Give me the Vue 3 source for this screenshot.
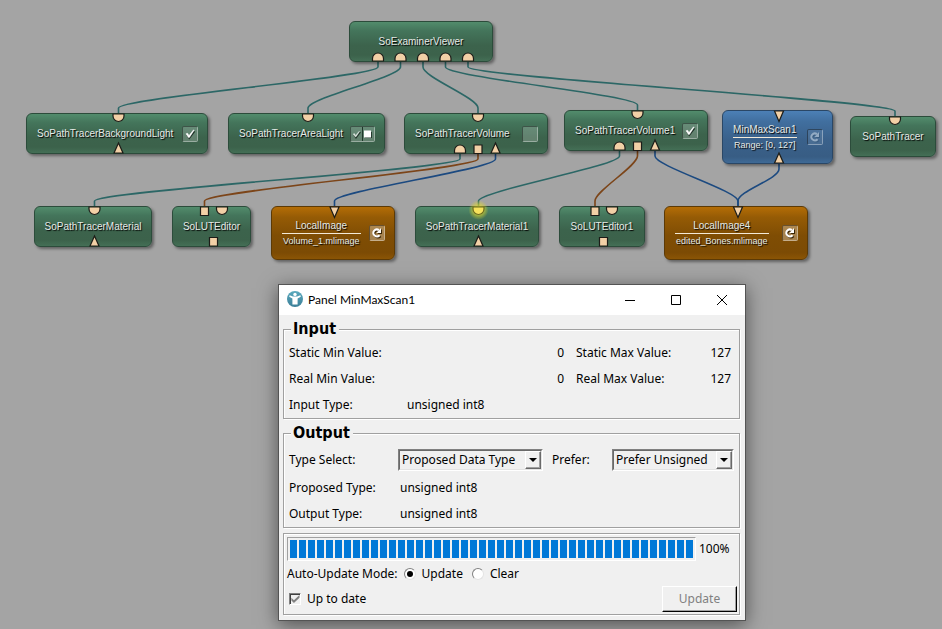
<script setup>
import { ref } from 'vue'

const nodes = [
  { x: 349, y: 21, w: 144, h: 41, kind: 'scene', name: 'SoExaminerViewer' },
  { x: 26, y: 113, w: 182, h: 41, kind: 'scene', name: 'SoPathTracerBackgroundLight', tool: 'check' },
  { x: 228, y: 113, w: 157, h: 41, kind: 'scene', name: 'SoPathTracerAreaLight', tool: 'double' },
  { x: 404, y: 113, w: 144, h: 41, kind: 'scene', name: 'SoPathTracerVolume', tool: 'empty' },
  { x: 564, y: 110, w: 144, h: 41, kind: 'scene', name: 'SoPathTracerVolume1', tool: 'check' },
  { x: 722, y: 110, w: 111, h: 54, kind: 'image', name: 'MinMaxScan1', info: 'Range: [0, 127]', tool: 'reload', dim: true },
  { x: 850, y: 116, w: 86, h: 41, kind: 'scene', name: 'SoPathTracer' },
  { x: 34, y: 206, w: 118, h: 41, kind: 'scene', name: 'SoPathTracerMaterial' },
  { x: 172, y: 206, w: 79, h: 41, kind: 'scene', name: 'SoLUTEditor' },
  { x: 271, y: 206, w: 124, h: 54, kind: 'macro', name: 'LocalImage', info: 'Volume_1.mlimage', tool: 'reload' },
  { x: 415, y: 206, w: 124, h: 41, kind: 'scene', name: 'SoPathTracerMaterial1' },
  { x: 559, y: 206, w: 86, h: 41, kind: 'scene', name: 'SoLUTEditor1' },
  { x: 664, y: 206, w: 144, h: 54, kind: 'macro', name: 'LocalImage4', info: 'edited_Bones.mlimage', tool: 'reload' },
]

const shapes = {
  dome: 'M-5.5 0V-2.5A5.5 5.5 0 0 1 5.5 -2.5V0Z',
  cup: 'M-5.5 0V2A5.5 5.5 0 0 0 5.5 2V0Z',
  up: 'M-4.5 0L0 -10L4.5 0Z',
  down: 'M-4.5 0L0 10.5L4.5 0Z',
  box: 'M-4 0V-8.5H4V0Z',
  boxTop: 'M-4 0V8.5H4V0Z',
}

const ports = [
  ['dome', 378, 61], ['dome', 400.5, 61], ['dome', 423, 61], ['dome', 445.5, 61], ['dome', 468, 61],
  ['cup', 118.5, 114], ['up', 118.5, 153],
  ['cup', 308, 114],
  ['cup', 478, 114], ['dome', 460, 153], ['box', 478, 153.5], ['up', 495.5, 153],
  ['cup', 637.5, 111], ['dome', 619.5, 150], ['box', 637.5, 150.5], ['up', 655, 150],
  ['down', 779, 111], ['up', 779, 163],
  ['cup', 895, 117],
  ['cup', 94.5, 207], ['up', 94.5, 246],
  ['boxTop', 204.5, 207], ['cup', 222, 207], ['box', 213.5, 246],
  ['down', 334.5, 207],
  ['cup', 478.5, 207, true], ['up', 478.5, 246],
  ['boxTop', 595, 207], ['cup', 612, 207], ['box', 603.5, 246],
  ['down', 738, 207],
]

const wires = [
  ['scene', 378, 62, 118.5, 113], ['scene', 400.5, 62, 308, 113], ['scene', 423, 62, 478, 113],
  ['scene', 445.5, 62, 637.5, 110], ['scene', 468, 62, 895, 116],
  ['scene', 460, 154, 94.5, 206], ['base', 478, 154, 204.5, 206], ['image', 495.5, 154, 334.5, 206],
  ['scene', 619.5, 151, 478.5, 206], ['base', 637.5, 151, 595, 206], ['image', 655, 151, 738, 206],
  ['image', 779, 164, 738, 206],
]

const wirePath = ([, x1, y1, x2, y2]) =>
  `M${x1} ${y1}V${y1 + 5}C${x1} ${y1 + 15} ${x2} ${y2 - 15} ${x2} ${y2 - 5}V${y2}`

const typeSelect = ref('Proposed Data Type')
const prefer = ref('Prefer Unsigned')
const mode = ref('Update')
const upToDate = ref(true)
</script>

<template>
  <main class="canvas">
    <svg class="layer" aria-hidden="true">
      <path v-for="(w, i) in wires" :key="i" class="wire" :class="w[0]" :d="wirePath(w)" />
    </svg>

    <div
      v-for="n in nodes"
      :key="n.name"
      class="node"
      :class="[n.kind, { plain: !n.tool, detailed: n.info }]"
      :style="{ left: n.x + 'px', top: n.y + 'px', width: n.w + 'px', height: n.h + 'px' }"
    >
      <div class="caption">
        <div class="name">{{ n.name }}</div>
        <div v-if="n.info" class="info">{{ n.info }}</div>
      </div>
      <button v-if="n.tool" class="tool" :class="[n.tool, { dim: n.dim }]" type="button" :aria-label="n.name">
        <svg v-if="n.tool === 'check'" width="14" height="14" viewBox="0 0 14 14">
          <path d="M4 7.5L6.3 11L11.5 4.2" fill="none" stroke="#1f3328" stroke-width="1.8" />
          <path d="M3 6.8L4.6 6.3L6 8.6L10.6 2.8L11 3.4L6.4 10.4H5.4Z" fill="#fff" stroke="#fff" stroke-width=".5" />
        </svg>
        <svg v-else-if="n.tool === 'double'" width="23" height="14" viewBox="0 0 23 14">
          <path d="M3 7.7L5 10.8L9.3 5" fill="none" stroke="#1f3328" stroke-width="1.5" />
          <path d="M2.2 7L3.4 6.6L4.6 8.4L8.2 4.2L8.6 4.6L5 9.8H4.2Z" fill="#e4ebe6" stroke="#e4ebe6" stroke-width=".4" />
          <path d="M11.5 0V14" stroke="#20382b" />
          <path d="M14 5H21V11H14Z" fill="#24382c" />
          <path d="M13 3.5H20V10.5H13Z" fill="#fff" />
        </svg>
        <svg v-else-if="n.tool === 'reload'" width="14" height="14" viewBox="0 0 14 14">
          <g class="arrow-shadow" transform="translate(1 1)">
            <path d="M9.6 9.2A3.6 3.4 0 1 1 9 4.2" fill="none" stroke-width="2" />
            <path d="M11 2V7H6.4Z" stroke="none" />
          </g>
          <g class="arrow">
            <path d="M9.6 9.2A3.6 3.4 0 1 1 9 4.2" fill="none" stroke-width="2" />
            <path d="M11 2V7H6.4Z" stroke="none" />
          </g>
        </svg>
      </button>
    </div>

    <svg class="layer ports" aria-hidden="true">
      <defs>
        <radialGradient id="glow">
          <stop offset="0" stop-color="#ffee30" stop-opacity=".9" />
          <stop offset=".55" stop-color="#e6dc28" stop-opacity=".55" />
          <stop offset="1" stop-color="#e6dc28" stop-opacity="0" />
        </radialGradient>
      </defs>
      <circle cx="478.5" cy="210" r="10" fill="url(#glow)" />
      <path
        v-for="(p, i) in ports"
        :key="i"
        class="port"
        :class="{ active: p[3] }"
        :d="shapes[p[0]]"
        :transform="`translate(${p[1]} ${p[2]})`"
      />
    </svg>

    <section class="window">
      <header class="titlebar">
        <svg class="logo" width="16" height="16" viewBox="0 0 16 16" aria-hidden="true">
          <defs>
            <linearGradient id="disc" x1="0" y1="0" x2="0" y2="1">
              <stop offset="0" stop-color="#5aa9bd" />
              <stop offset="1" stop-color="#3c7f98" />
            </linearGradient>
          </defs>
          <circle cx="8" cy="8" r="8" fill="url(#disc)" />
          <circle cx="8" cy="3.4" r="1.7" fill="#fff" />
          <path d="M2.6 4.3L6 5.4H10L13.4 4.3L13.8 5.8L10.6 7.6V13.4H5.4V7.6L2.2 5.8Z" fill="#fff" />
        </svg>
        <h1 class="title">Panel MinMaxScan1</h1>
        <button class="winbtn" type="button" aria-label="Minimize">
          <svg width="10" height="10" viewBox="0 0 10 10"><path d="M0 5.5H10" /></svg>
        </button>
        <button class="winbtn" type="button" aria-label="Maximize">
          <svg width="10" height="10" viewBox="0 0 10 10"><path d="M.5 .5H9.5V9.5H.5Z" /></svg>
        </button>
        <button class="winbtn" type="button" aria-label="Close">
          <svg width="10" height="10" viewBox="0 0 10 10"><path d="M0 0L10 10M10 0L0 10" /></svg>
        </button>
      </header>

      <div class="body">
        <fieldset class="group">
          <legend>Input</legend>
          <div class="input-grid">
            <span>Static Min Value:</span><span class="num">0</span>
            <span>Static Max Value:</span><span class="num">127</span>
            <span>Real Min Value:</span><span class="num">0</span>
            <span>Real Max Value:</span><span class="num">127</span>
            <span>Input Type:</span><span>unsigned int8</span>
          </div>
        </fieldset>

        <fieldset class="group">
          <legend>Output</legend>
          <div class="output-grid">
            <label for="type-select">Type Select:</label>
            <span class="combo">
              <select id="type-select" v-model="typeSelect"><option>Proposed Data Type</option></select>
            </span>
            <label for="prefer">Prefer:</label>
            <span class="combo">
              <select id="prefer" v-model="prefer"><option>Prefer Unsigned</option></select>
            </span>
            <span>Proposed Type:</span><span class="wide">unsigned int8</span>
            <span>Output Type:</span><span class="wide">unsigned int8</span>
          </div>
        </fieldset>

        <div class="group status">
          <div class="row progress-row">
            <progress id="scan" max="100" value="100"></progress>
            <label for="scan">100%</label>
          </div>
          <div class="row mode-row" role="radiogroup" aria-labelledby="mode-label">
            <span id="mode-label">Auto-Update Mode:</span>
            <label class="choice"><input v-model="mode" type="radio" name="mode" value="Update" />Update</label>
            <label class="choice"><input v-model="mode" type="radio" name="mode" value="Clear" />Clear</label>
          </div>
          <div class="row last-row">
            <label class="choice"><input v-model="upToDate" type="checkbox" />Up to date</label>
            <button class="update" type="button" disabled>Update</button>
          </div>
        </div>
      </div>
    </section>
  </main>
</template>

<style>
body {
  margin: 0;
  background: #a4a4a4;
}
</style>

<style scoped>
.canvas {
  position: relative;
  min-height: 100vh;
  overflow: hidden;
  background: #a4a4a4;
  font-family: 'Liberation Sans', Arial, sans-serif;
}
.layer {
  position: absolute;
  inset: 0;
  width: 100%;
  height: 100%;
  pointer-events: none;
}
.wire {
  fill: none;
  stroke-width: 1.6;
}
.wire.scene { stroke: #2c6766; }
.wire.base { stroke: #7c4519; }
.wire.image { stroke: #1c4a80; }
.port {
  fill: #f2d0a6;
  stroke: #1c1c18;
  stroke-width: 1.2;
}
.port.active { fill: #f7e25c; stroke: #6b6a20; }

.node {
  position: absolute;
  box-sizing: border-box;
  display: flex;
  align-items: center;
  justify-content: space-between;
  padding: 0 9px 0 8px;
  border: 1px solid;
  border-radius: 6px;
  box-shadow: 2px 2px 3px rgba(0, 0, 0, 0.4);
  color: #e6ebe7;
}
.node.detailed { padding-left: 10px; }
.node.plain {
  justify-content: center;
  padding: 0;
}
.node.scene {
  border-color: #2c4c3b;
  background: linear-gradient(#528c6c, #44755b 22%, #3c634c 60%, #3c624b 85%, #446f56);
}
.node.image {
  border-color: #2a4766;
  background: linear-gradient(#4c80b6, #416f9f 20%, #3a618b 55%, #385d84 88%, #3f6a96);
}
.node.macro {
  border-color: #5c3a06;
  background: linear-gradient(#b46d06, #955b05 20%, #7f4d04 55%, #7c4b04 88%, #8b5505);
}
.caption {
  text-align: center;
  white-space: nowrap;
  text-shadow: 1px 1px 1px #000;
}
.name {
  padding: 0 2px;
  font-size: 10px;
  line-height: 14px;
}
.detailed .name { padding: 0; }
.info {
  padding: 0 1px;
  border-top: 1px solid #f4ead8;
  font-size: 9px;
  line-height: 14px;
}
.tool {
  flex: none;
  box-sizing: border-box;
  width: 16px;
  height: 16px;
  padding: 0;
  border: 1px solid;
  border-color: rgba(0, 0, 0, 0.4) rgba(255, 255, 255, 0.35) rgba(255, 255, 255, 0.35) rgba(0, 0, 0, 0.4);
  border-radius: 2px;
  background: rgba(255, 255, 255, 0.2);
}
.tool svg { display: block; }
.tool.double { width: 25px; }
.macro .tool { background: rgba(255, 255, 255, 0.3); }
.tool.dim { background: rgba(255, 255, 255, 0.08); }
.arrow { fill: #fff; stroke: #fff; }
.arrow-shadow { fill: #3a2505; stroke: #3a2505; }
.dim .arrow { fill: #93abc4; stroke: #93abc4; }
.dim .arrow-shadow { fill: #3a5d82; stroke: #3a5d82; }

.window {
  position: absolute;
  left: 278px;
  top: 284px;
  box-sizing: border-box;
  width: 468px;
  border: 1px solid #545454;
  background: #f0f0f0;
  box-shadow: 0 4px 18px rgba(0, 0, 0, 0.5);
  color: #000;
  font: 12px/26px 'Noto Sans', Tahoma, sans-serif;
}
.titlebar {
  display: flex;
  align-items: center;
  height: 30px;
  padding-left: 8px;
  background: #fff;
}
.logo { margin-bottom: 2px; }
.title {
  flex: 1;
  margin: 0 0 0 5px;
  font: 12px/28px Lato, 'Open Sans', sans-serif;
}
.winbtn {
  display: flex;
  align-items: center;
  justify-content: center;
  width: 46px;
  height: 28px;
  padding: 0;
  border: 0;
  background: none;
}
.winbtn path {
  fill: none;
  stroke: #000;
}
.body { padding: 3px 5px 5px 4px; }
.group {
  min-width: 0;
  margin: 0 0 3px;
  padding: 0;
  border: 1px solid #a0a0a0;
  box-shadow: inset 1px 1px 0 #fff, 1px 1px 0 #fff;
}
legend {
  margin-left: 7px;
  padding: 0 3px 0 2px;
  background: #f0f0f0;
  font: bold 16px/22px 'DejaVu Sans Condensed', Tahoma, sans-serif;
}
.input-grid {
  display: grid;
  grid-template-columns: 118px 157px 1fr auto;
  padding: 0 8px 0 5px;
}
.num { text-align: right; }
.num + span { padding-left: 12px; }
.num + span:nth-child(4n + 1) { padding-left: 0; }
.output-grid {
  display: grid;
  grid-template-columns: 109px 145px 1fr 122px;
  grid-template-rows: 31px;
  align-items: center;
  padding: 0 5px;
}
.output-grid label:nth-of-type(2) { padding-left: 9px; }
.wide {
  grid-column: span 3;
  padding-left: 2px;
}
.combo {
  position: relative;
  display: block;
  box-sizing: border-box;
  height: 22px;
  border: 1px solid;
  border-color: #808080 #fff #fff #808080;
}
.combo select {
  display: block;
  box-sizing: border-box;
  width: 100%;
  height: 20px;
  padding: 0 0 0 2px;
  border: 1px solid;
  border-color: #696969 #e3e3e3 #e3e3e3 #696969;
  border-radius: 0;
  appearance: none;
  background: #f0f0f0;
  color: #000;
  font: inherit;
  line-height: 18px;
}
.combo::before {
  content: '';
  position: absolute;
  top: 1px;
  right: 1px;
  box-sizing: border-box;
  width: 16px;
  height: 18px;
  border: 1px solid;
  border-color: #fff #696969 #696969 #fff;
  background: #f0f0f0;
  box-shadow: inset -1px -1px 0 #a0a0a0;
  pointer-events: none;
}
.combo::after {
  content: '';
  position: absolute;
  top: 8px;
  right: 5px;
  border: 4px solid transparent;
  border-top-color: #000;
  border-bottom: 0;
  pointer-events: none;
}
.group.status {
  margin: 5px 0 0;
  padding: 3px 2px 2px 3px;
}
.row {
  display: flex;
  align-items: center;
}
.progress-row {
  gap: 3px;
  padding-right: 2px;
  line-height: 24px;
}
.progress-row label { width: 36px; }
progress {
  flex: 1;
  min-width: 0;
  box-sizing: border-box;
  height: 24px;
  padding: 2px;
  border: 1px solid;
  border-color: #a0a0a0 #fff #fff #a0a0a0;
  appearance: none;
  background: #f0f0f0;
}
progress::-webkit-progress-bar { background: #f0f0f0; }
progress::-webkit-progress-value {
  background: repeating-linear-gradient(90deg, #0078d7 0 7px, #f0f0f0 7px 9px);
}
.mode-row { height: 25px; }
.choice {
  display: flex;
  align-items: center;
}
.mode-row .choice { margin-left: 6px; }
.mode-row .choice + .choice { margin-left: 9px; }
.choice input {
  display: grid;
  place-items: center;
  box-sizing: border-box;
  width: 12px;
  height: 12px;
  margin: 0 6px 0 0;
  border: 1px solid;
  border-color: #808080 #fff #fff #808080;
  appearance: none;
  background: #fff;
}
.choice input[type='radio'] {
  border-color: #808080 #e3e3e3 #e3e3e3 #808080;
  border-radius: 50%;
}
.choice input[type='radio']:checked::before {
  content: '';
  width: 6px;
  height: 6px;
  border-radius: 50%;
  background: #000;
}
.choice input[type='checkbox'] {
  background: #f0f0f0;
  box-shadow: inset 1px 1px 0 #404040;
}
.choice input[type='checkbox']:checked::before {
  content: '';
  width: 9px;
  height: 8px;
  background: #808080;
  clip-path: polygon(10% 35%, 38% 65%, 100% 0, 100% 35%, 38% 100%, 10% 68%);
}
.last-row {
  justify-content: space-between;
  padding-left: 2px;
}
.update {
  box-sizing: border-box;
  width: 75px;
  height: 26px;
  padding: 0;
  border: 1px solid;
  border-color: #fff #000 #000 #fff;
  background: #f0f0f0;
  box-shadow: inset -1px -1px 0 #a0a0a0;
  color: #808080;
  font: inherit;
  line-height: 24px;
}
</style>
